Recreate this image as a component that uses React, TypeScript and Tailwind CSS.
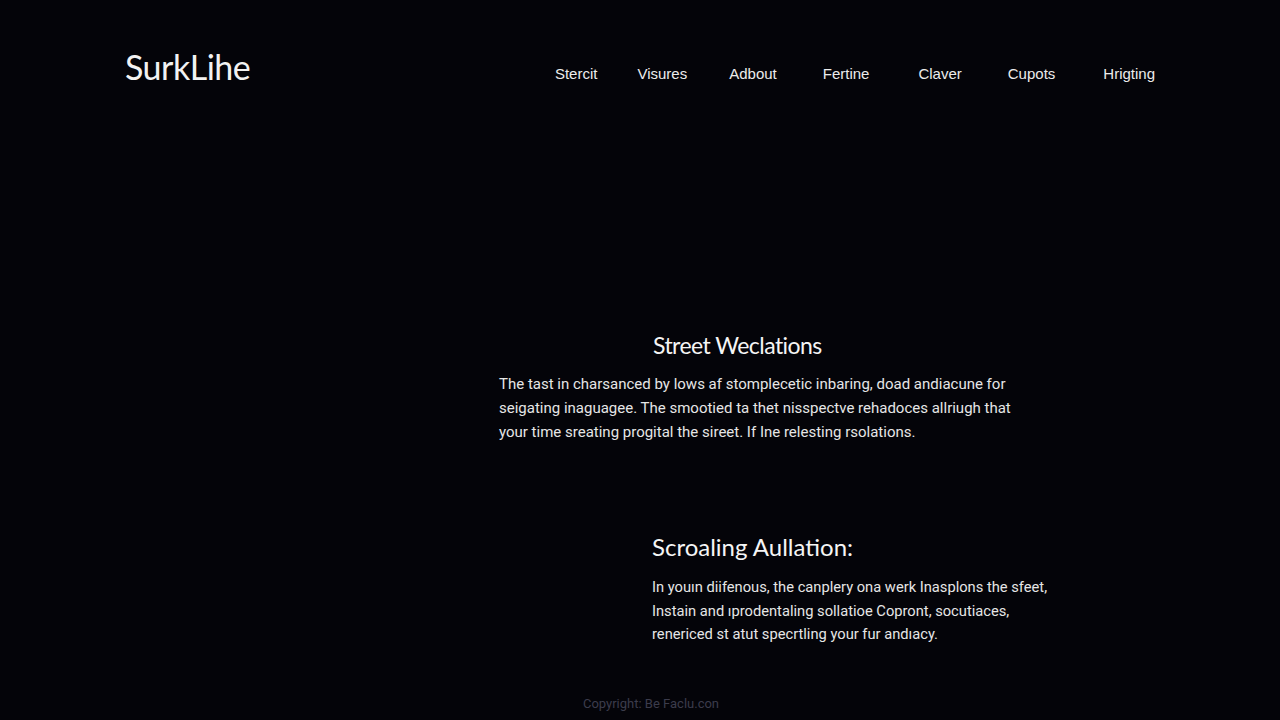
import React from "react";

const nav: [string, string][] = [
  ["Stercit", ""],
  ["Visures", "ml-[40px]"],
  ["Adbout", "ml-[42px]"],
  ["Fertine", "ml-[46px]"],
  ["Claver", "ml-[49px]"],
  ["Cupots", "ml-[46px]"],
  ["Hrigting", "ml-[48px]"],
];

export default function App() {
  return (
    <div className="w-[1280px] h-[720px] bg-[#040409] text-white flex flex-col overflow-hidden" style={{ fontFamily: "Roboto, 'Liberation Sans', sans-serif" }}>
      <header className="flex justify-between pl-[125px] pr-[125px] pt-[46px] h-[100px] items-start">
        <div className="text-[34px] leading-[42px] text-[#f2f2f2] tracking-[-0.5px]" style={{ fontFamily: "Lato, 'Open Sans', sans-serif" }}>SurkLihe</div>
        <nav className="flex pt-[19px] text-[15px] leading-[18px] text-[#ececec]" style={{ fontFamily: "'Liberation Sans', Arial, sans-serif" }}>
          {nav.map(([n, c]) => (
            <span key={n} className={c}>{n}</span>
          ))}
        </nav>
      </header>

      <section className="mt-[230px] ml-[499px] w-[540px]">
        <h2 className="ml-[154px] text-[23px] leading-[30px] text-[#f5f5f5] tracking-[-0.55px]" style={{ fontFamily: "Lato, sans-serif" }}>Street Weclations</h2>
        <p className="mt-[12px] text-[15px] leading-[24px] text-[#e6e6e6]">
          The tast in charsanced by lows af stomplecetic inbaring, doad andiacune for
          <br />
          seigating inaguagee. The smootied ta thet nisspectve rehadoces allriugh that
          <br />
          your time sreating progital the sireet. If Ine relesting rsolations.
        </p>
      </section>

      <section className="mt-[88px] ml-[652px] w-[420px]">
        <h2 className="text-[24px] leading-[30px] text-[#f5f5f5]" style={{ fontFamily: "Lato, sans-serif" }}>Scroaling Aullation:</h2>
        <p className="mt-[14px] text-[14.7px] leading-[23.5px] text-[#e6e6e6]">
          In youın diifenous, the canplery ona werk Inasplons the sfeet,
          <br />
          Instain and ıprodentaling sollatioe Copront, socutiaces,
          <br />
          renericed st atut specrtling your fur andıacy.
        </p>
      </section>

      <footer className="mt-auto pb-[5px] text-center">
        <span className="ml-[22px] text-[13px] text-[#3c3c4c]">Copyright: Be Faclu.con</span>
      </footer>
    </div>
  );
}
